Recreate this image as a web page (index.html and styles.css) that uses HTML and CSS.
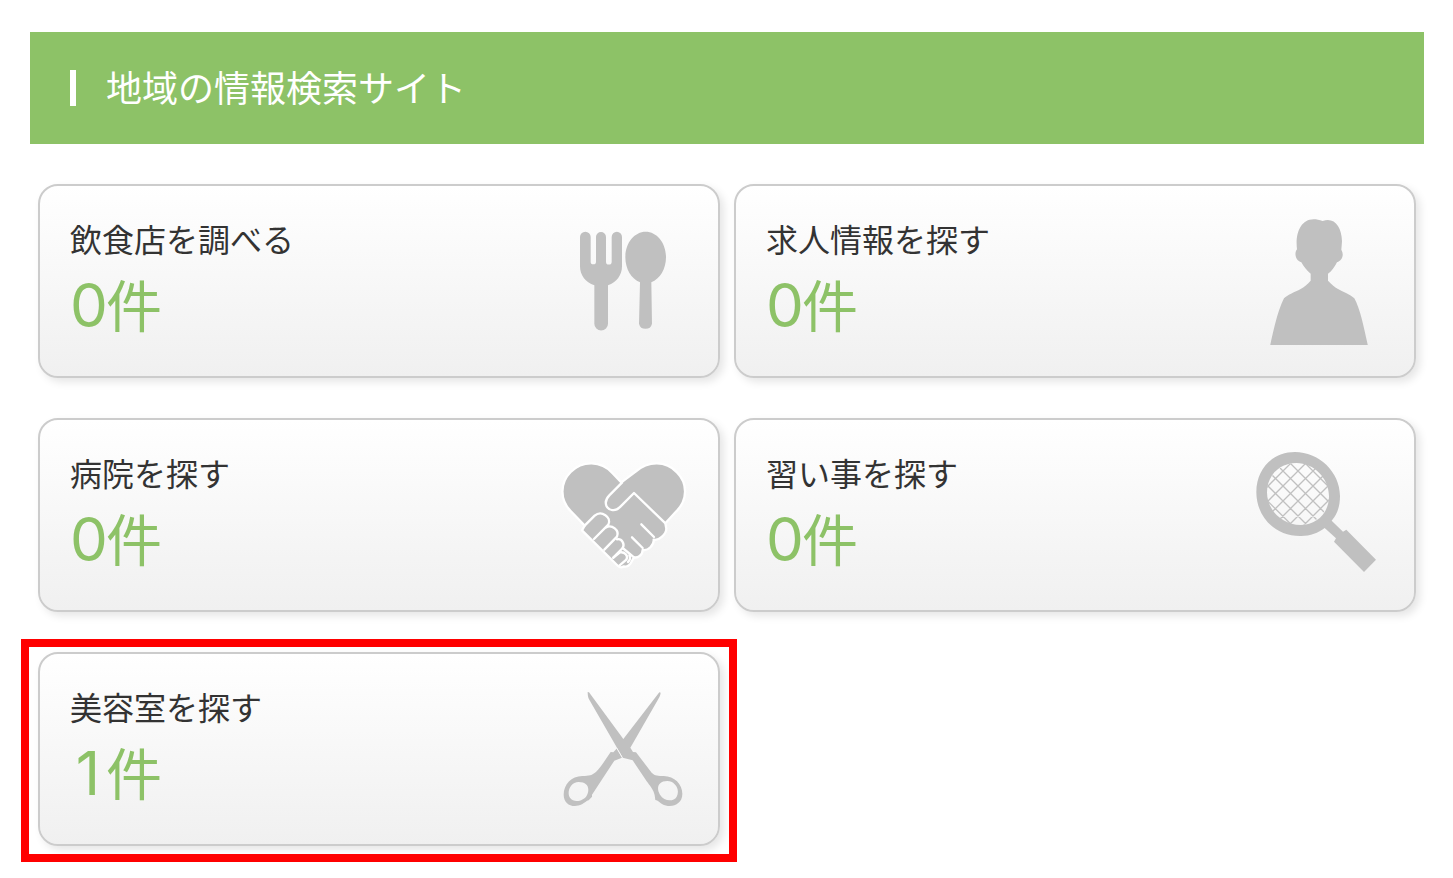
FILE: index.html
```html
<!DOCTYPE html>
<html lang="ja">
<head>
    <meta charset="UTF-8">
    <meta name="viewport" content="width=device-width, initial-scale=1.0">
    <title>地域の情報検索サイト</title>
    <link rel="stylesheet" href="styles.css">
</head>
<body>
    <div class="header">
        <h1>地域の情報検索サイト</h1>
    </div>

    <div class="cards">
        <a class="card" href="#">
            <div class="text">
                <h2>飲食店を調べる</h2>
                <p class="count"><span>0</span>件</p>
            </div>
            <!-- フォークとスプーン -->
            <svg class="icon" viewBox="30 6 384 384" aria-hidden="true">
                <path d="M90 66a16 16 0 0 1 32 0v74a8 8 0 0 0 16 0V66a15 15 0 0 1 30 0v74a8 8 0 0 0 17 0V66a15 15 0 0 1 31 0v88c0 26-16 49-42 57v115a20 20 0 0 1-41 0V211c-27-8-43-31-43-57z"/>
                <path d="M287 50c34 0 61 34 61 77 0 35-18 65-44 75l2 124a20 20 0 0 1-39 0l3-124c-26-10-44-40-44-75 0-43 27-77 61-77z"/>
            </svg>
        </a>

        <a class="card" href="#">
            <div class="text">
                <h2>求人情報を探す</h2>
                <p class="count"><span>0</span>件</p>
            </div>
            <!-- 人物 -->
            <svg class="icon" viewBox="48 36 384 384" aria-hidden="true">
                <path d="M248 48c34-13 57 16 58 61l-2 25c9 15 3 33-13 38-8 15-15 26-27 34v21c10 11 20 19 30 25 17 10 35 15 49 28 18 33 28 85 41 143H90c13-58 23-105 42-143 12-12 32-18 50-28 10-6 21-15 30-25v-21c-13-11-20-20-28-34-16-4-23-26-13-39-7-55 17-108 77-85z"/>
            </svg>
        </a>

        <a class="card" href="#">
            <div class="text">
                <h2>病院を探す</h2>
                <p class="count"><span>0</span>件</p>
            </div>
            <!-- ハート型の握手 -->
            <svg class="icon" viewBox="30 3 384 384" aria-hidden="true">
                <g class="outline">
                    <path d="M214 97L187 69C153 31 97 31 62 66c-33 33-33 84 0 117l42 44-8 14 108 107c6 6 12 5 18 1 9 3 20-5 23-15l7-12c11 3 26-7 26-22 16 4 35-16 33-31 14 4 38-16 38-33l-3-16 33-36c34-33 35-84 2-117-34-36-87-35-124-2z"/>
                    <path class="line" d="M344 218L252 129l-43 43c-12 13-33 11-40-5-4-11 0-22 9-31l38-38"/>
                    <path class="line" d="M104 227l30-30c20-17 52 4 41 27l-43 43"/>
                    <path class="line" d="M168 232c18-9 41 8 33 28l-38 39"/>
                    <path class="line" d="M201 268c15-3 24 14 17 26l-28 29"/>
                    <path class="line" d="M190 323l20-16c14-2 26 10 19 22l-21 18"/>
                    <path class="line" d="M218 294l34 28M238 316c5 10 2 15-4 20"/>
                    <path class="line" d="M246 262l32 32M274 223l38 38"/>
                </g>
            </svg>
        </a>

        <a class="card" href="#">
            <div class="text">
                <h2>習い事を探す</h2>
                <p class="count"><span>0</span>件</p>
            </div>
            <!-- ラケット -->
            <svg class="icon" viewBox="48 33 384 384" aria-hidden="true">
                <defs>
                    <clipPath id="net"><ellipse cx="174" cy="162" rx="95" ry="94"/></clipPath>
                </defs>
                <path fill-rule="evenodd" d="M165 36C236 36 300 95 300 168c0 31-8 55-25 74l34 33 10-6 89 90-36 37-90-91 6-10-34-31c-20 15-45 25-74 24C103 288 49 229 49 156 49 86 99 36 165 36zM169 69C118 69 81 107 81 157c0 54 47 98 101 98 48 0 85-36 85-86 0-54-45-100-98-100z"/>
                <g clip-path="url(#net)">
                    <path class="strings" d="M55 155L185 285M55 109L225 279M55 64L275 284M85 49L295 259M130 49L295 214M175 49L295 169M55 122L145 32M55 167L185 37M55 212L225 42M65 247L265 47M85 272L285 72M108 294L295 107M145 302L295 152"/>
                </g>
            </svg>
        </a>

        <a class="card selected" href="#">
            <div class="text">
                <h2>美容室を探す</h2>
                <p class="count"><span>1</span>件</p>
            </div>
            <!-- はさみ -->
            <svg class="icon" viewBox="30 15 384 384" aria-hidden="true">
                <path fill-rule="evenodd" d="M113 36l4 1 103 140L328 37l4 1c-1 7-3 12-7 19l-84 146 8 13 9 1 47 61c10 10 20 9 36 10 33 0 57 26 56 55 0 30-34 44-61 29-8-4-12-11-20-12l-2-14c-3-17-15-29-24-42l-42-63-30-8-8-14-93-161c-3-6-4-14-4-22zM352 303c-28 0-34 22-22 41 12 20 40 23 50 6 12-23-7-47-28-47z"/>
                <path fill-rule="evenodd" d="M201 205l15 28-23 9-67 102v6l-10 11c-7 1-12 8-20 12-28 13-55 0-55-29 0-31 23-56 56-56 20 0 29-1 43-14 14-15 28-37 42-58l8 1zM86 306c-25 0-37 31-26 47 11 16 40 11 50-6 11-21 4-41-24-41z"/>
                <path class="blade" d="M200 204l17 29"/>
            </svg>
        </a>
    </div>
</body>
</html>
```
FILE: styles.css
```css
body{
    margin: 0;
    padding: 32px 29px 0 30px;
    background-color: #fff;
    color: #333;
    font-family: "Noto Sans CJK JP", sans-serif;
}

h1, h2, p{
    margin: 0;
    font-weight: 400;
}

.header{
    padding: 36px 40px 40px;
    background-color: #8dc267;
}

.header h1{
    display: flex;
    align-items: center;
    color: #fff;
    font-size: 36px;
    line-height: 36px;
}

.header h1::before{
    content: "";
    width: 6px;
    height: 36px;
    margin: 2px 30px -2px 0;
    background-color: #fff;
}

.cards{
    display: grid;
    grid-template-columns: 1fr 1fr;
    gap: 40px 14px;
    padding: 40px 8px 32px;
}

.card{
    position: relative;
    display: flex;
    justify-content: space-between;
    align-items: center;
    padding: 30px;
    border: 2px solid #ccc;
    border-radius: 20px;
    background: linear-gradient(#fff, #f0f0f0) padding-box;
    box-shadow: 4px 4px 8px rgba(0, 0, 0, 0.1);
    color: #333;
    text-decoration: none;
}

.card h2{
    font-size: 32px;
    line-height: 44px;
}

.count{
    color: #8dc267;
    font-size: 56px;
    line-height: 86px;
}

.count span{
    display: inline-block;
    width: 36px;
    font-family: Inter, sans-serif;
    font-size: 60px;
    line-height: 60px;
    text-align: center;
}

.icon{
    flex: none;
    width: 128px;
    height: 128px;
    fill: #c0c0c0;
}

.outline path{
    stroke: #fff;
    stroke-width: 7px;
    stroke-linejoin: round;
    stroke-linecap: round;
}

.outline .line{
    fill: none;
}

.strings{
    fill: none;
    stroke: #c0c0c0;
    stroke-width: 4px;
}

.blade{
    stroke: #f8f8f8;
    stroke-width: 3px;
}

/* 赤枠 */
.selected::after{
    content: "";
    position: absolute;
    top: -15px;
    right: -19px;
    bottom: -18px;
    left: -19px;
    border: 8px solid #f00;
}
```
